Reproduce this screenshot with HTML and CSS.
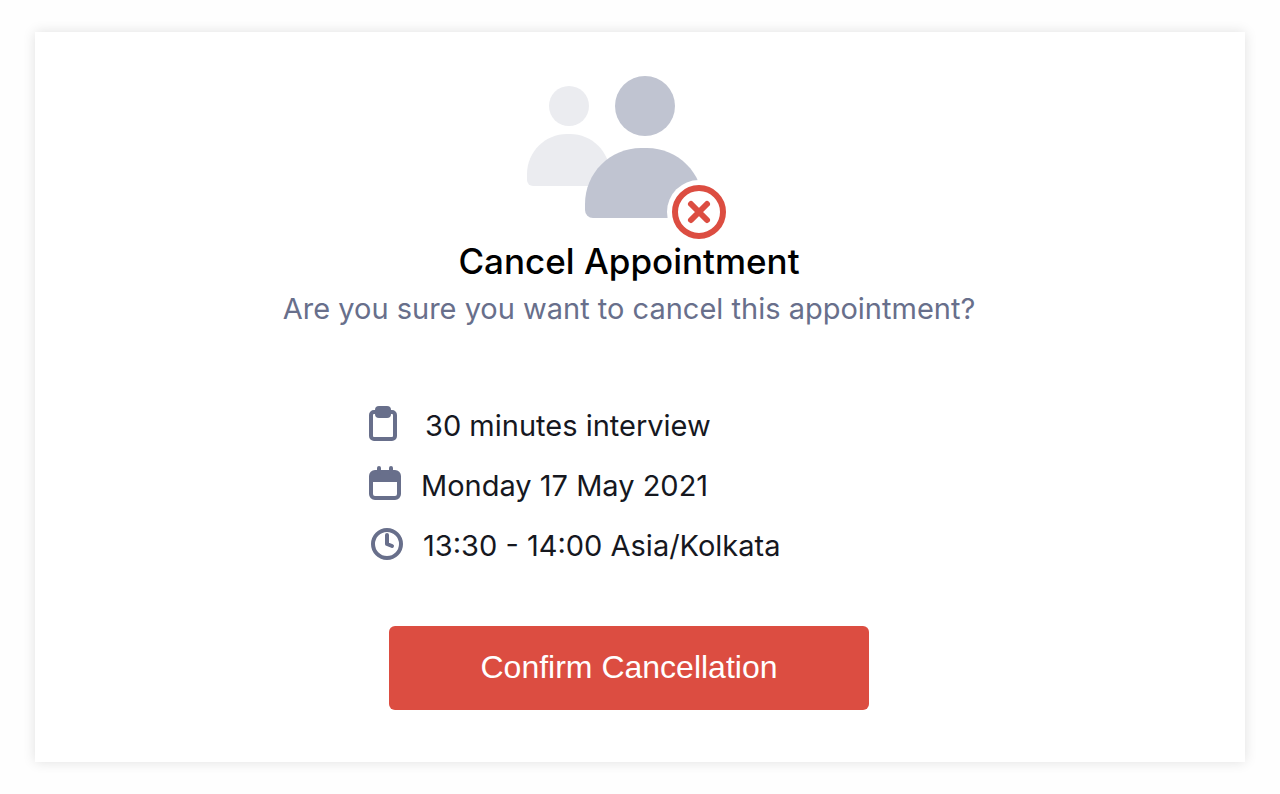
FILE: index.html
```html
<!DOCTYPE html>
<html lang="en">
<head>
<meta charset="utf-8">
<meta name="viewport" content="width=device-width, initial-scale=1">
<title>Cancel Appointment</title>
<link rel="stylesheet" href="styles.css">
</head>
<body>
<main class="card">
  <svg class="illustration" width="204" height="164" viewBox="0 0 204 164" aria-hidden="true">
    <g fill="#ebecf0">
      <circle cx="42" cy="30" r="20"/>
      <path d="M0 98C0 76 18 58 40 58h3c22 0 40 18 40 40v6a6 6 0 0 1-6 6H6a6 6 0 0 1-6-6z"/>
    </g>
    <g fill="#c0c4d1">
      <circle cx="118" cy="30" r="30"/>
      <path d="M58 128C58 97 83 72 114 72h6c31 0 56 25 56 56v6a8 8 0 0 1-8 8H66a8 8 0 0 1-8-8z"/>
    </g>
    <circle cx="172" cy="136" r="32" fill="#fff"/>
    <g fill="none" stroke="#dc4d41" stroke-width="6" stroke-linecap="round">
      <circle cx="172" cy="136" r="24"/>
      <path d="M164 128l16 16M180 128l-16 16"/>
    </g>
  </svg>
  <h1 class="title">Cancel Appointment</h1>
  <p class="question">Are you sure you want to cancel this appointment?</p>
  <ul class="details">
    <li class="detail detail-type">
      <svg width="28" height="40" viewBox="0 0 28 40" aria-hidden="true">
        <rect x="2" y="6" width="24" height="27" rx="3" fill="none" stroke="#686f8b" stroke-width="4"/>
        <rect x="6" y="0" width="16" height="12" rx="4" fill="#686f8b"/>
      </svg>
      <span>30 minutes interview</span>
    </li>
    <li class="detail">
      <svg width="32" height="40" viewBox="0 0 32 40" aria-hidden="true">
        <path fill="#686f8b" fill-rule="evenodd" d="M6 4H26a6 6 0 0 1 6 6V28a6 6 0 0 1-6 6H6a6 6 0 0 1-6-6V10a6 6 0 0 1 6-6zM4 16V28a2 2 0 0 0 2 2H26a2 2 0 0 0 2-2V16z"/>
        <path d="M10 2v5M22 2v5" stroke="#686f8b" stroke-width="4" stroke-linecap="round"/>
      </svg>
      <span>Monday 17 May 2021</span>
    </li>
    <li class="detail">
      <svg width="34" height="40" viewBox="0 0 34 40" aria-hidden="true" fill="none" stroke="#686f8b" stroke-width="4" stroke-linecap="round" stroke-linejoin="round">
        <circle cx="18" cy="18" r="14"/>
        <path d="M18 9v9l5 2"/>
      </svg>
      <span>13:30 - 14:00 Asia/Kolkata</span>
    </li>
  </ul>
  <button class="confirm" type="button">Confirm Cancellation</button>
</main>
</body>
</html>
```
FILE: styles.css
```css
* {
  box-sizing: border-box;
}

body {
  margin: 0;
  padding: 32px 35px;
  background: #fefefe;
  font-family: Inter, "Liberation Sans", sans-serif;
}

.card {
  display: flex;
  flex-direction: column;
  align-items: center;
  padding: 44px 22px 52px 0;
  background: #fff;
  box-shadow: 0 0 12px rgba(0, 0, 0, 0.12);
}

.illustration {
  display: block;
}

.title {
  margin: 0;
  font-size: 35px;
  font-weight: 500;
  line-height: 42px;
  color: #000;
}

.question {
  margin: 0;
  font-size: 29px;
  line-height: 54px;
  color: #686f8b;
}

.details {
  width: 100%;
  max-width: 520px;
  margin: 60px 0 50px;
  padding: 0;
  list-style: none;
  font-size: 29px;
  line-height: 60px;
  color: #16181f;
}

.detail {
  display: flex;
  align-items: center;
  gap: 20px;
}

.detail-type {
  gap: 28px;
}

.detail svg {
  flex: none;
}

.confirm {
  width: 100%;
  max-width: 480px;
  height: 84px;
  padding: 0 0 2px;
  border: 0;
  border-radius: 6px;
  background: #dc4d41;
  color: #fff;
  font: 500 32px "Liberation Sans", Arial, sans-serif;
  cursor: pointer;
}
```
